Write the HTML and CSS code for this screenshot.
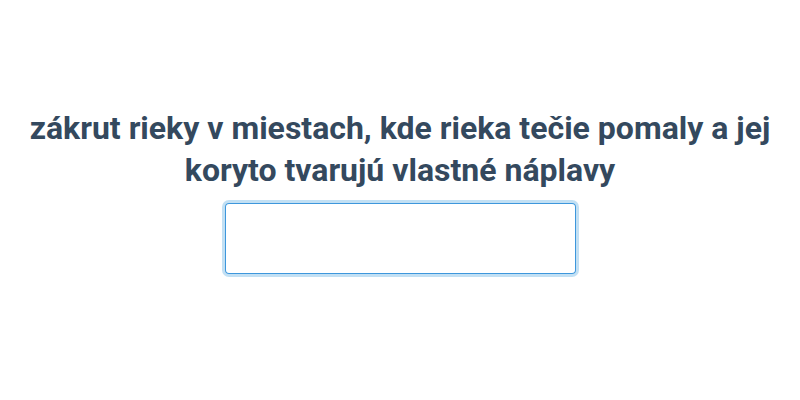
FILE: index.html
```html
<!DOCTYPE html>
<html lang="sk">
<head>
    <meta charset="UTF-8">
    <meta name="viewport" content="width=device-width, initial-scale=1.0">
    <title>Krížovka</title>
    <link rel="stylesheet" href="styles.css">
</head>
<body>
    <div class="wrap">
        <h2 class="clue">zákrut rieky v miestach, kde rieka tečie pomaly a jej koryto tvarujú vlastné náplavy</h2>
        <input type="text" class="answer" id="answer">
    </div>
</body>
</html>
```

FILE: styles.css
```css
body {
    font-family: Roboto, "Noto Sans", sans-serif;
    background: #fff;
    margin: 0;
    padding: 0;
}
.wrap {
    height: 400px;
    box-sizing: border-box;
    padding-bottom: 18px;
    display: flex;
    flex-direction: column;
    align-items: center;
    justify-content: center;
    text-align: center;
}
.clue {
    color: #34495e;
    font-size: 32px;
    font-weight: bold;
    line-height: 1.3;
    margin: 0 0 12px;
    padding: 0 20px;
}
.answer {
    -webkit-appearance: none;
    appearance: none;
    background: #fff;
    width: 351px;
    height: 71px;
    box-sizing: border-box;
    border: none;
    border-radius: 4px;
    box-shadow: inset 0 0 0 1px #3d97dc, 0 0 0 3px rgba(52, 152, 219, 0.3);
    outline: none;
    font-size: 24px;
    text-align: center;
}
```
